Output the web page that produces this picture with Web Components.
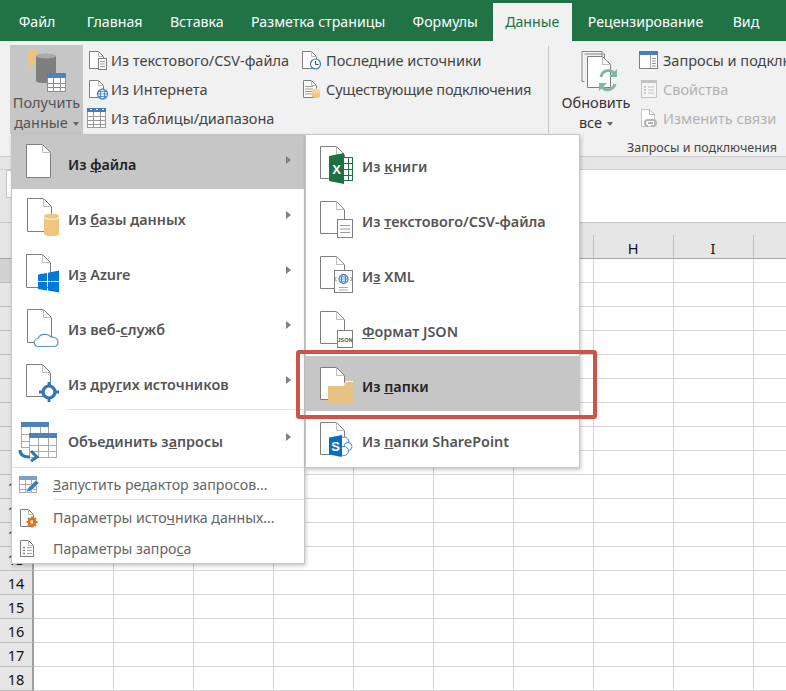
<!DOCTYPE html>
<html lang="ru"><head><meta charset="utf-8"><title>Excel</title>
<style>
html,body{margin:0;padding:0;background:#fff}
body{font-family:"Noto Sans","Open Sans",sans-serif;font-size:15px;color:#444}
</style></head>
<body>
<excel-app>
  <excel-tabs>
    <excel-tab style="margin-right:4px">Файл</excel-tab>
    <excel-tab>Главная</excel-tab>
    <excel-tab>Вставка</excel-tab>
    <excel-tab>Разметка страницы</excel-tab>
    <excel-tab>Формулы</excel-tab>
    <excel-tab active>Данные</excel-tab>
    <excel-tab style="margin-left:1px">Рецензирование</excel-tab>
    <excel-tab style="margin-left:2px">Вид</excel-tab>
  </excel-tabs>
  <ribbon-bar>
    <ribbon-group style="width:549px" separated>
      <ribbon-large icon="getdata" pressed style="margin-left:10px;width:73px">Получить<span slot="second">данные</span></ribbon-large>
      <ribbon-col style="margin-left:4px;width:215px">
        <ribbon-item icon="rcsv">Из текстового/CSV-файла</ribbon-item>
        <ribbon-item icon="rweb">Из Интернета</ribbon-item>
        <ribbon-item icon="rtable">Из таблицы/диапазона</ribbon-item>
      </ribbon-col>
      <ribbon-col>
        <ribbon-item icon="rrecent">Последние источники</ribbon-item>
        <ribbon-item icon="rexisting" style="letter-spacing:-.15px">Существующие подключения</ribbon-item>
      </ribbon-col>
    </ribbon-group>
    <ribbon-group style="flex:1;min-width:0" label="Запросы и подключения">
      <ribbon-large icon="refresh" dark style="margin-left:6px;width:82px">Обновить<span slot="second">все</span></ribbon-large>
      <ribbon-col style="margin-left:2px">
        <ribbon-item icon="rqueries">Запросы и подключения</ribbon-item>
        <ribbon-item icon="rprops" disabled>Свойства</ribbon-item>
        <ribbon-item icon="rlinks" disabled>Изменить связи</ribbon-item>
      </ribbon-col>
    </ribbon-group>
  </ribbon-bar>
  <formula-bar></formula-bar>
  <sheet-grid></sheet-grid>

  <flyout-menu style="left:11px;top:134px;width:294px">
    <menu-item icon="file" active style="--h:54px;--t:14px" arrow>Из <u>ф</u>айла</menu-item>
    <menu-item icon="db" arrow>Из <u>б</u>азы данных</menu-item>
    <menu-item icon="azure" arrow>И<u>з</u> Azure</menu-item>
    <menu-item icon="web" arrow>Из веб-<u>с</u>лужб</menu-item>
    <menu-item icon="other" arrow>Из дру<u>г</u>их источников</menu-item>
    <menu-rule style="--inset:55px"></menu-rule>
    <menu-item icon="merge" arrow style="--h:57px;--t:16px">Объединить з<u>а</u>просы</menu-item>
    <menu-rule></menu-rule>
    <menu-small icon="medit" style="--h:31px;--p:2px"><u>З</u>апустить редактор запросов...</menu-small>
    <menu-rule style="--inset:41px"></menu-rule>
    <menu-small icon="mgear" style="--h:33px;--p:2px">Параметры исто<u>ч</u>ника данных...</menu-small>
    <menu-small icon="mlist" style="--h:30px">Параметры запро<u>с</u>а</menu-small>
  </flyout-menu>

  <flyout-menu style="left:305px;top:134px;width:275px;padding:1px 0 1px">
    <menu-item icon="xl">Из <u>к</u>ниги</menu-item>
    <menu-item icon="txt">Из <u>т</u>екстового/CSV-файла</menu-item>
    <menu-item icon="xml">И<u>з</u> XML</menu-item>
    <menu-item icon="json"><u>Ф</u>ормат JSON</menu-item>
    <menu-item icon="folder" active>Из <u>п</u>апки</menu-item>
    <menu-item icon="sp">Из <u>п</u>апки SharePoint</menu-item>
  </flyout-menu>

  <callout-frame style="left:296px;top:350px;width:301px;height:69px"></callout-frame>
</excel-app>

<script>
const G='#7f7f7f';
const page=(x,y,w=25,h=34,f=8,c=G)=>`<path d="M${x+.5} ${y+.5}H${x+w-f-.5}L${x+w-.5} ${y+f+.5}V${y+h-.5}H${x+.5}Z" fill="#fff" stroke="${c}"/><path d="M${x+w-f-.5} ${y+.5}V${y+f+.5}H${x+w-.5}" fill="none" stroke="#bdbdbd"/>`;
const grid=(x,y,w,h,head,cols,rows,hc,line='#9a9a9a')=>{
  let s=`<rect x="${x+.5}" y="${y+.5}" width="${w-1}" height="${h-1}" fill="#fff" stroke="${line}"/><rect x="${x}" y="${y}" width="${w}" height="${head}" fill="${hc}"/>`;
  for(let i=1;i<cols;i++){const X=Math.round(x+w*i/cols)+.5;s+=`<path d="M${X} ${y+head}V${y+h}" stroke="${line}"/>`}
  for(let i=1;i<rows;i++){const Y=Math.round(y+head+(h-head)*i/rows)+.5;s+=`<path d="M${x} ${Y}H${x+w}" stroke="${line}"/>`}
  return s};
const lines=(x,y,w,n,step,c='#9a9a9a')=>{let s='';for(let i=0;i<n;i++)s+=`<path d="M${x} ${y+i*step+.5}h${w}" stroke="${c}"/>`;return s};
const globe=(cx,cy,r,c='#3d7fc1')=>`<circle cx="${cx}" cy="${cy}" r="${r}" fill="#fff" stroke="${c}" stroke-width="1.2"/><ellipse cx="${cx}" cy="${cy}" rx="${r*.45}" ry="${r}" fill="none" stroke="${c}"/><path d="M${cx-r} ${cy}h${2*r}M${cx-r*.85} ${cy-r*.5}h${1.7*r}M${cx-r*.85} ${cy+r*.5}h${1.7*r}" stroke="${c}" stroke-width=".8"/>`;
const cyl=(x,y,w,h,c,t)=>`<path d="M${x} ${y+2}V${y+h-2}C${x} ${y+h+.7} ${x+w} ${y+h+.7} ${x+w} ${y+h-2}V${y+2}Z" fill="${c}"/><ellipse cx="${x+w/2}" cy="${y+2}" rx="${w/2}" ry="2.5" fill="${t}"/>`;

const ICONS={
 file:[48,44,page(6,3)],
 db:[48,44,page(7,3)+cyl(24,19,15,22,'#eec680','#eec680')+`<path d="M24 22c1 3 14 3 15 0" fill="none" stroke="#fff"/>`],
 azure:[48,44,page(6,4)+`<path d="M18 24.5l9-1.5v8h-9zM28 22.8l11-2.3v10.500h-11zM18 32h9v8.500l-9-1.500zM28 32h11v10.500l-11-2z" fill="#0078d7"/>`],
 web:[48,44,page(7,4)+`<path d="M18.500 41.500a4 4 0 0 1-.5-8a7 7 0 0 1 7-4a7 7 0 0 1 6 2.500a5 5 0 0 1 3 .5a4.700 4.700 0 0 1 1 9z" fill="#fff" stroke="#5a93c8" stroke-width="1.200"/>`],
 other:[48,44,page(6,4,25,33)+`<circle cx="29" cy="32" r="6" fill="#fff" stroke="#2e75b6" stroke-width="3.200"/><path d="M29 22v4M29 38v4M19 32h4M35 32h4" stroke="#2e75b6" stroke-width="2.800"/>`],
 merge:[48,44,grid(1,6,28,26,5,3,3,'#4f81bd','#aaa')+grid(9,17,28,25,5,3,3,'#4f81bd','#aaa')+`<path d="M0 34c0 5 4 7 10 7" fill="none" stroke="#2e75b6" stroke-width="3"/><path d="M11 35l6 6-6 4" fill="none" stroke="#2e75b6" stroke-width="3"/>`],
 xl:[48,44,page(6,4,25,33)+grid(29,15,10,24,0,2,4,'#fff','#1e7145')+`<path d="M15 14L30 11V42L15 39Z" fill="#1e7145"/><text x="22.500" y="32" text-anchor="middle" font-family="Liberation Sans,sans-serif" font-weight="700" font-size="13" fill="#fff">X</text>`],
 txt:[48,44,page(6,4,25,33)+`<rect x="23.500" y="22.500" width="15" height="18" fill="#fff" stroke="${G}"/>`+lines(26,28,10,3,3.500)],
 xml:[48,44,page(6,4,25,33)+`<rect x="20.500" y="18.500" width="18" height="22" fill="#fff" stroke="${G}"/>`+globe(29.500,27,4.500)+`<path d="M22.500 25l-2 2 2 2M36.500 25l2 2-2 2" fill="none" stroke="#777"/>`+lines(25,35,9,2,2.500,'#aaa')],
 json:[48,44,page(6,4,25,33)+`<rect x="23.500" y="23.500" width="15" height="17" fill="#fff" stroke="${G}"/><text x="31" y="34.500" text-anchor="middle" font-family="Liberation Sans,sans-serif" font-size="5.500" fill="#555">JSON</text>`],
 folder:[48,44,page(6,5,25,33)+`<path d="M14 24h15l3-4.500h7V41H14Z" fill="#e8c282"/><path d="M29 24l3-4.500h7" fill="none" stroke="#fff"/>`],
 sp:[48,44,page(6,5,25,33)+`<circle cx="30" cy="25" r="5" fill="#fff" stroke="#3f8fd2"/><circle cx="34" cy="29.500" r="4" fill="#fff" stroke="#3f8fd2"/><circle cx="30" cy="34" r="4.500" fill="#fff" stroke="#3f8fd2"/><path d="M15 20.500L28 18V40L15 37.500Z" fill="#0f6cbd"/><text x="21.500" y="33.500" text-anchor="middle" font-family="Liberation Sans,sans-serif" font-weight="700" font-size="13" fill="#fff">S</text>`],
 medit:[22,20,grid(1,1,18,17,4,3,3,'#7f9fc4','#aaa')+`<path d="M8 17l2-4 8-8 3 3-8 8z" fill="#3d7fc1" stroke="#fff" stroke-width=".5"/>`],
 mgear:[22,20,page(2,1,14,18,5)+`<circle cx="14" cy="14" r="3" fill="none" stroke="#e3731c" stroke-width="2.500"/><path d="M14 8.500v2M14 17.500v2M8.500 14h2M17.500 14h2M10 10l1.500 1.500M16.500 16.500l1.500 1.500M18 10l-1.500 1.500M11.500 16.500L10 18" stroke="#e3731c" stroke-width="2"/>`],
 mlist:[22,20,page(2,2,14,17,5)+`<path d="M5 9.500h2M5 12.500h2M5 15.500h2" stroke="#888" stroke-width="1.500"/>`+lines(9,9,5,3,3,'#aaa')],
 rcsv:[20,21,page(2,1,15,18,5)+`<rect x="11.500" y="8.500" width="8" height="11" fill="#fff" stroke="${G}"/>`+lines(13,11,5,3,2.500)],
 rweb:[20,21,page(2,1,15,18,5)+globe(15.500,15,5)],
 rtable:[20,21,grid(0,0,19,20,4,3,4,'#3f7cb8')+`<path d="M3 1.500h2M9 1.500h2M15 1.500h2" stroke="#fff"/>`],
 rrecent:[20,21,page(0,1,15,18,5)+`<circle cx="13.500" cy="14" r="5" fill="#fff" stroke="#3d7fc1" stroke-width="1.200"/><path d="M13.500 11v3.500h3" fill="none" stroke="#444"/>`],
 rexisting:[20,21,page(1,1,14,18,5)+lines(3,7,8,4,2.500)+cyl(10,10,8,9,'#eec680','#f3d79f')],
 rqueries:[20,21,`<rect x=".5" y="1.500" width="18" height="17" fill="#fff" stroke="${G}"/><rect x="0" y="1" width="19" height="4" fill="#4a7ebb"/><path d="M11.500 5v13" stroke="#aaa"/>`+lines(13,8,4,4,2.500)],
 rprops:[20,21,`<rect x="2.500" y="1.500" width="15" height="17" fill="#f4f4f4" stroke="#c3c3c3"/><rect x="2" y="1" width="16" height="3" fill="#c3c3c3"/><path d="M5 8h2M5 11h2M5 14h2" stroke="#bbb" stroke-width="1.500"/>`+lines(9,7.500,6,3,3,'#c3c3c3')],
 rlinks:[20,21,page(2,1,14,18,5,'#c3c3c3')+`<path d="M6 15a3 3 0 0 1 3-3h3M8 18H9a3 3 0 0 1-3-3M17 15a3 3 0 0 0-3-3h-2M12 18h2a3 3 0 0 0 3-3M9 15h5" fill="none" stroke="#b5b5b5" stroke-width="2"/>`],
 getdata:[73,47,`<path d="M20 4h9l-5 9h5L16 28l4-11h-4z" fill="#ecc47e"/>`+cyl(26,9,20,29,'#7f7f7f','#a9a9a9')+grid(37,28,19,19,5,3,3,'#4f81bd','#8f8f8f')],
 refresh:[82,47,`<path d="M27 6.500h20v30M29.500 9h20v30M27 6.500v30h2.500" fill="none" stroke="#888"/>`+page(32,11,24,32,8)+`<g fill="none" stroke="#7fb7a2" stroke-width="3"><path d="M46 32a7.500 7.500 0 0 1 13-4"/><path d="M60 39a7.500 7.500 0 0 1-13 3"/></g><path d="M62 24v8h-8zM44 46v-8h8z" fill="#7fb7a2"/>`]
};
class UiIcon extends HTMLElement{
  static get observedAttributes(){return ['name']}
  constructor(){super();this.attachShadow({mode:'open'}).innerHTML='<style>:host{display:block;flex:none;line-height:0}svg{display:block;overflow:visible}</style><svg></svg>'}
  attributeChangedCallback(){this.render()}
  connectedCallback(){this.render()}
  render(){const d=ICONS[this.getAttribute('name')];if(!d)return;const s=this.shadowRoot.querySelector('svg');
    s.setAttribute('width',d[0]);s.setAttribute('height',d[1]);s.setAttribute('viewBox',`0 0 ${d[0]} ${d[1]}`);s.innerHTML=d[2]}
}
customElements.define('ui-icon',UiIcon);
function def(name,css,html,extra){
  customElements.define(name,class extends HTMLElement{
    constructor(){super();const r=this.attachShadow({mode:'open'});const t=document.createElement('template');t.innerHTML=`<style>${css}</style>${html}`;r.appendChild(document.importNode(t.content,true))}
    connectedCallback(){extra&&extra.call(this,this.shadowRoot)}
  });
}
const setIcon=function(r){r.querySelector('ui-icon').setAttribute('name',this.getAttribute('icon'))};
def('excel-app',`:host{display:block;position:relative;width:786px;height:691px;overflow:hidden;background:#fff}`,'<slot></slot>');
def('excel-tabs',`:host{display:flex;height:41px;box-sizing:border-box;padding:3px 0 0 5px;background:#217346;align-items:stretch}`,'<slot></slot>');
def('excel-tab',`:host{display:flex;align-items:center;padding:0 13.700px 2px;color:#fff;font-size:14.200px;white-space:nowrap}
:host([active]){background:#f1f1f1;color:#217346;padding:0 12.500px 2px;margin:0 1.200px}`,'<slot></slot>');
def('ribbon-bar',`:host{display:flex;height:116px;box-sizing:border-box;background:#f1f1f1;border-bottom:1px solid #d0d0d0;overflow:hidden}`,'<slot></slot>');
def('ribbon-group',`:host{display:block;position:relative;box-sizing:border-box;height:115px}
.row{display:flex;height:89px;padding-top:4px}
.sep{position:absolute;right:0;top:5px;height:88px;width:1px;background:#c6c6c6}
.label{margin:5px 0 0 78px;font-size:12.500px;line-height:18px;color:#444;white-space:nowrap}`,
 `<div class="row"><slot></slot></div><div class="sep"></div><div class="label"></div>`,function(r){
  r.querySelector('.label').textContent=this.getAttribute('label')||'';
  if(!this.hasAttribute('separated'))r.querySelector('.sep').remove();
});
def('ribbon-col',`:host{display:flex;flex-direction:column;flex:none}`,'<slot></slot>');
def('ribbon-item',`:host{display:flex;align-items:center;gap:4px;height:29px;white-space:nowrap;font-size:14.500px;color:#444}
:host([disabled]){color:#b1b1b1}
ui-icon{margin-top:2px}`,'<ui-icon></ui-icon><span><slot></slot></span>',setIcon);
def('ribbon-large',`:host{display:flex;flex-direction:column;align-items:center;height:89px;font-size:14.500px;line-height:20px;color:#555;flex:none}
:host([pressed]){background:#c6c6c6}
:host([dark]){color:#333}
.t{height:20px}
.tri{display:inline-block;width:0;height:0;border:3.500px solid transparent;border-top:4px solid #666;border-bottom:0;margin-left:5px;vertical-align:2px}`,
 `<ui-icon style="align-self:flex-start"></ui-icon><div class="t"><slot></slot></div><div class="t"><slot name="second"></slot><span class="tri"></span></div>`,setIcon);
def('formula-bar',`:host{display:block;background:#e6e6e6}
.top{height:12px;border-bottom:1px solid #cfcfcf}
.bar{display:flex;height:52px;border-bottom:1px solid #c6c6c6}
.left{width:300px;padding:0 0 0 6px;box-sizing:border-box}
.name{width:120px;height:28px;background:#fff;border:1px solid #c6c6c6;box-sizing:border-box}
.input{flex:1;background:#fff}`,`<div class="top"></div><div class="bar"><div class="left"><div class="name"></div></div><div class="input"></div></div>`);
def('sheet-grid',`:host{display:grid;grid-template-columns:34px repeat(10,80px);grid-template-rows:36px repeat(18,24px);font-size:14.500px;color:#111;background:#fff}
.h{background:#e6e6e6;display:flex;align-items:flex-end;justify-content:center;box-sizing:border-box;line-height:20px}
.c{background:#e6e6e6;border-bottom:1px solid #a6a6a6;position:relative;padding-right:2px}
.c::after{content:"";position:absolute;right:0;bottom:0;height:23px;width:1px;background:#bdbdbd}
.r{border-right:2px solid #9f9f9f;border-bottom:1px solid #bdbdbd;align-items:center;padding:0}
.sel{background:#d2d2d2}
.x{border-right:1px solid #d4d4d4;border-bottom:1px solid #d4d4d4;box-sizing:border-box}`,'',function(r){
  let h='<div class="h c"></div>';
  'ABCDEFGHIJ'.split('').forEach(l=>h+=`<div class="h c">${l}</div>`);
  for(let i=1;i<=18;i++){h+=`<div class="h r${i===1?' sel':''}">${i}</div>`;for(let j=0;j<10;j++)h+='<div class="x"></div>'}
  const t=document.createElement('template');t.innerHTML=h;r.appendChild(t.content);
});
def('flyout-menu',`:host{position:absolute;display:block;box-sizing:border-box;background:#fff;border:1px solid #c6c6c6;box-shadow:1px 2px 4px rgba(0,0,0,.22)}`,'<slot></slot>');
def('menu-rule',`:host{display:block;height:1px;background:#e1e1e1;margin-left:var(--inset,0)}`,'');
def('menu-item',`:host{display:flex;align-items:flex-start;height:var(--h,55px);box-sizing:border-box;padding:6px 0 0 8px;font-weight:600;font-size:14.400px;color:#555;white-space:nowrap;position:relative}
:host([active]){background:#c6c6c6;color:#222}
.t{margin-top:var(--t,15px);line-height:20px}
.a{position:absolute;right:13px;top:calc(50% - 6px);width:0;height:0;border:4.500px solid transparent;border-left:5px solid #7f7f7f;border-right:0}`,
 `<ui-icon></ui-icon><span class="t"><slot></slot></span><span class="a"></span>`,function(r){
  setIcon.call(this,r);
  if(!this.hasAttribute('arrow')){const a=r.querySelector('.a');a&&a.remove()}
});
def('menu-small',`:host{display:flex;align-items:center;gap:13px;height:var(--h,30px);box-sizing:border-box;padding:var(--p,0) 0 0 6px;font-size:14.200px;color:#666;white-space:nowrap}`,
 `<ui-icon></ui-icon><span><slot></slot></span>`,setIcon);
def('callout-frame',`:host{position:absolute;display:block;box-sizing:border-box;border:4px solid #cf5349;border-radius:3px;pointer-events:none}`,'');
</script>
</body></html>
